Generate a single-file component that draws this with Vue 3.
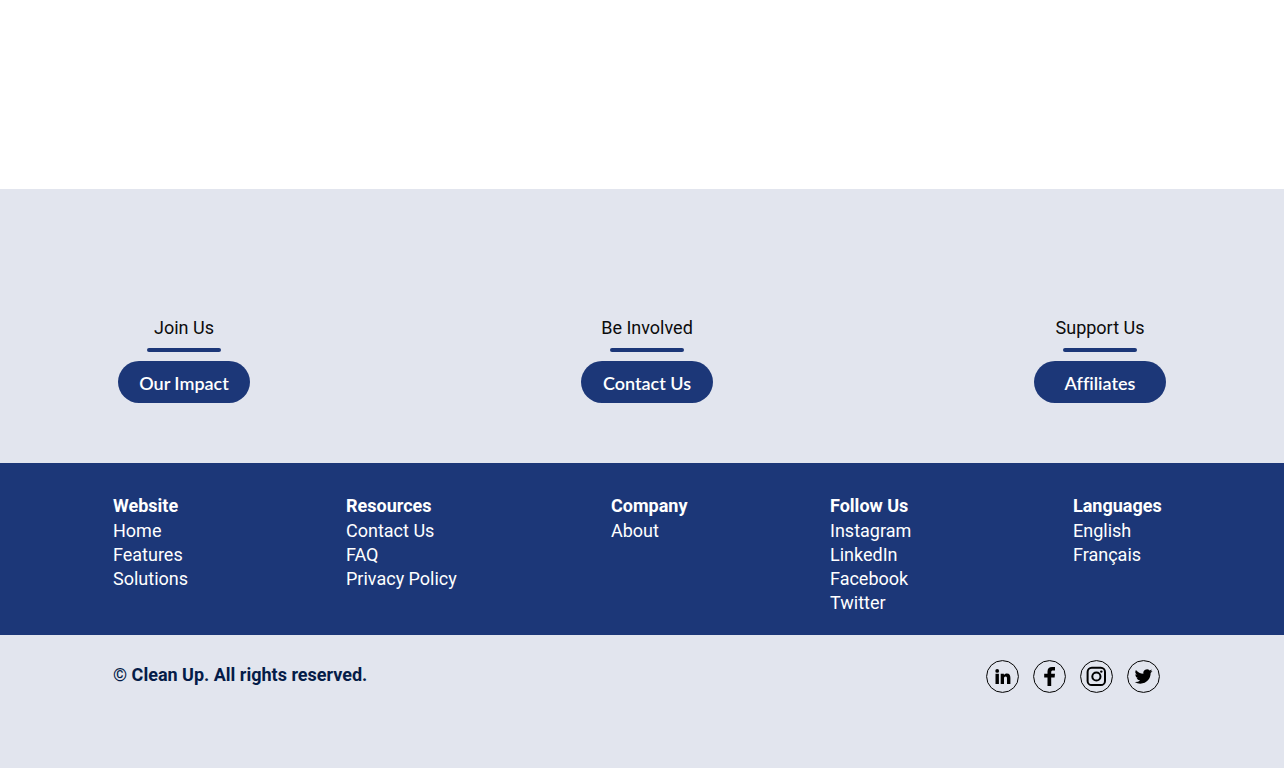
<script setup>
const actions = [
  { title: 'Join Us', label: 'Our Impact' },
  { title: 'Be Involved', label: 'Contact Us' },
  { title: 'Support Us', label: 'Affiliates' },
]

const columns = [
  { title: 'Website', links: ['Home', 'Features', 'Solutions'] },
  { title: 'Resources', links: ['Contact Us', 'FAQ', 'Privacy Policy'] },
  { title: 'Company', links: ['About'] },
  { title: 'Follow Us', links: ['Instagram', 'LinkedIn', 'Facebook', 'Twitter'] },
  { title: 'Languages', links: ['English', 'Français'] },
]
</script>

<template>
  <div class="page">
    <main class="content"></main>

    <section class="actions">
      <div v-for="item in actions" :key="item.title" class="action">
        <h2>{{ item.title }}</h2>
        <span class="rule"></span>
        <button type="button">{{ item.label }}</button>
      </div>
    </section>

    <footer class="footer">
      <nav class="links">
        <div v-for="column in columns" :key="column.title" class="column">
          <h3>{{ column.title }}</h3>
          <ul>
            <li v-for="link in column.links" :key="link"><a href="#">{{ link }}</a></li>
          </ul>
        </div>
      </nav>

      <div class="bottom">
        <p>© Clean Up. All rights reserved.</p>
        <div class="social">
          <a href="#" aria-label="LinkedIn">
            <svg viewBox="0 0 33 33">
              <circle class="ring" cx="16.5" cy="16.5" r="15.9" />
              <circle cx="11.2" cy="10.9" r="1.9" />
              <path d="M9.5 13.8h3.4v10.1H9.5zM14.7 13.8h3.2v1.3c.6-1 1.7-1.6 3-1.6 2.7 0 3.5 1.8 3.5 4.5v5.9H21v-5.2c0-1.4-.3-2.3-1.4-2.3-1.2 0-1.6.9-1.6 2.3v5.2h-3.3z" />
            </svg>
          </a>
          <a href="#" aria-label="Facebook">
            <svg viewBox="0 0 33 33">
              <circle class="ring" cx="16.5" cy="16.5" r="15.9" />
              <path d="M14.5 26v-8.6h-3.3v-3.6h3.3v-2.3c0-3 1.8-4.4 4.6-4.4h2.9v3.3h-2c-1.3 0-1.8.6-1.8 1.7v1.7H22l-.4 3.6h-3.4V26z" />
            </svg>
          </a>
          <a href="#" aria-label="Instagram">
            <svg viewBox="0 0 33 33">
              <circle class="ring" cx="16.5" cy="16.5" r="15.9" />
              <rect class="line" x="7.6" y="7.7" width="17.4" height="17.4" rx="4.2" />
              <circle class="line" cx="16.4" cy="16.5" r="4.1" />
              <circle cx="21.3" cy="11.6" r="1.2" />
            </svg>
          </a>
          <a href="#" aria-label="Twitter">
            <svg viewBox="0 0 33 33">
              <circle class="ring" cx="16.5" cy="16.5" r="15.9" />
              <path transform="translate(7.7 7.6) scale(.74)" d="M23.95 4.57a10 10 0 0 1-2.82.78 4.96 4.96 0 0 0 2.16-2.73 9.9 9.9 0 0 1-3.12 1.19 4.92 4.92 0 0 0-8.39 4.48A13.98 13.98 0 0 1 1.64 3.16a4.92 4.92 0 0 0 1.52 6.57 4.9 4.9 0 0 1-2.23-.61v.06a4.92 4.92 0 0 0 3.95 4.83 5 5 0 0 1-2.21.08 4.94 4.94 0 0 0 4.6 3.42A9.87 9.87 0 0 1 0 19.54a14 14 0 0 0 7.55 2.21c9.05 0 14-7.5 14-13.98 0-.21 0-.42-.02-.63a9.94 9.94 0 0 0 2.42-2.57z" />
            </svg>
          </a>
        </div>
      </div>
    </footer>
  </div>
</template>

<style>
body {
  margin: 0;
}
</style>

<style scoped>
.page {
  display: flex;
  flex-direction: column;
  min-height: 100vh;
  background: #e2e5ee;
  font-family: Roboto, 'Liberation Sans', sans-serif;
  font-size: 18px;
  line-height: 24px;
}

h2,
h3,
p,
ul {
  margin: 0;
  padding: 0;
  font-size: 18px;
}

.content {
  min-height: 189px;
  background: #fff;
}

.actions {
  display: grid;
  grid-template-columns: 463fr 453fr auto;
  padding: 127px 118px 60px;
}

.action {
  display: flex;
  flex-direction: column;
  align-items: center;
  justify-self: start;
}

h2 {
  color: #0c0c0c;
  font-weight: 400;
}

.rule {
  width: 74px;
  height: 4px;
  margin: 8px 0 9px;
  border-radius: 2px;
  background: #1c3778;
}

button {
  width: 132px;
  height: 42px;
  padding: 2px 0 0;
  border: 0;
  border-radius: 21px;
  background: #1c3778;
  color: #fff;
  font-family: Lato, sans-serif;
  font-size: 18px;
  font-weight: 600;
  font-variant-ligatures: none;
  cursor: pointer;
}

.footer {
  display: flex;
  flex-direction: column;
}

.links {
  display: grid;
  grid-template-columns: 233fr 265fr 219fr 243fr 98px;
  padding: 31px 113px 20px;
  background: #1c3778;
  color: #fff;
}

h3 {
  margin-bottom: 1px;
  font-weight: 700;
}

ul {
  list-style: none;
}

a {
  color: inherit;
  text-decoration: none;
}

.bottom {
  display: flex;
  align-items: flex-start;
  justify-content: space-between;
  padding: 25px 124px 75px 113px;
}

.bottom p {
  padding-top: 3px;
  color: #051c48;
  font-weight: 700;
}

.social {
  display: flex;
  gap: 14px;
  color: #000;
}

.social svg {
  display: block;
  width: 33px;
  height: 33px;
  fill: currentColor;
}

.social .ring,
.social .line {
  fill: none;
  stroke: currentColor;
}

.social .ring {
  stroke-width: 1;
}

.social .line {
  stroke-width: 2;
}
</style>
